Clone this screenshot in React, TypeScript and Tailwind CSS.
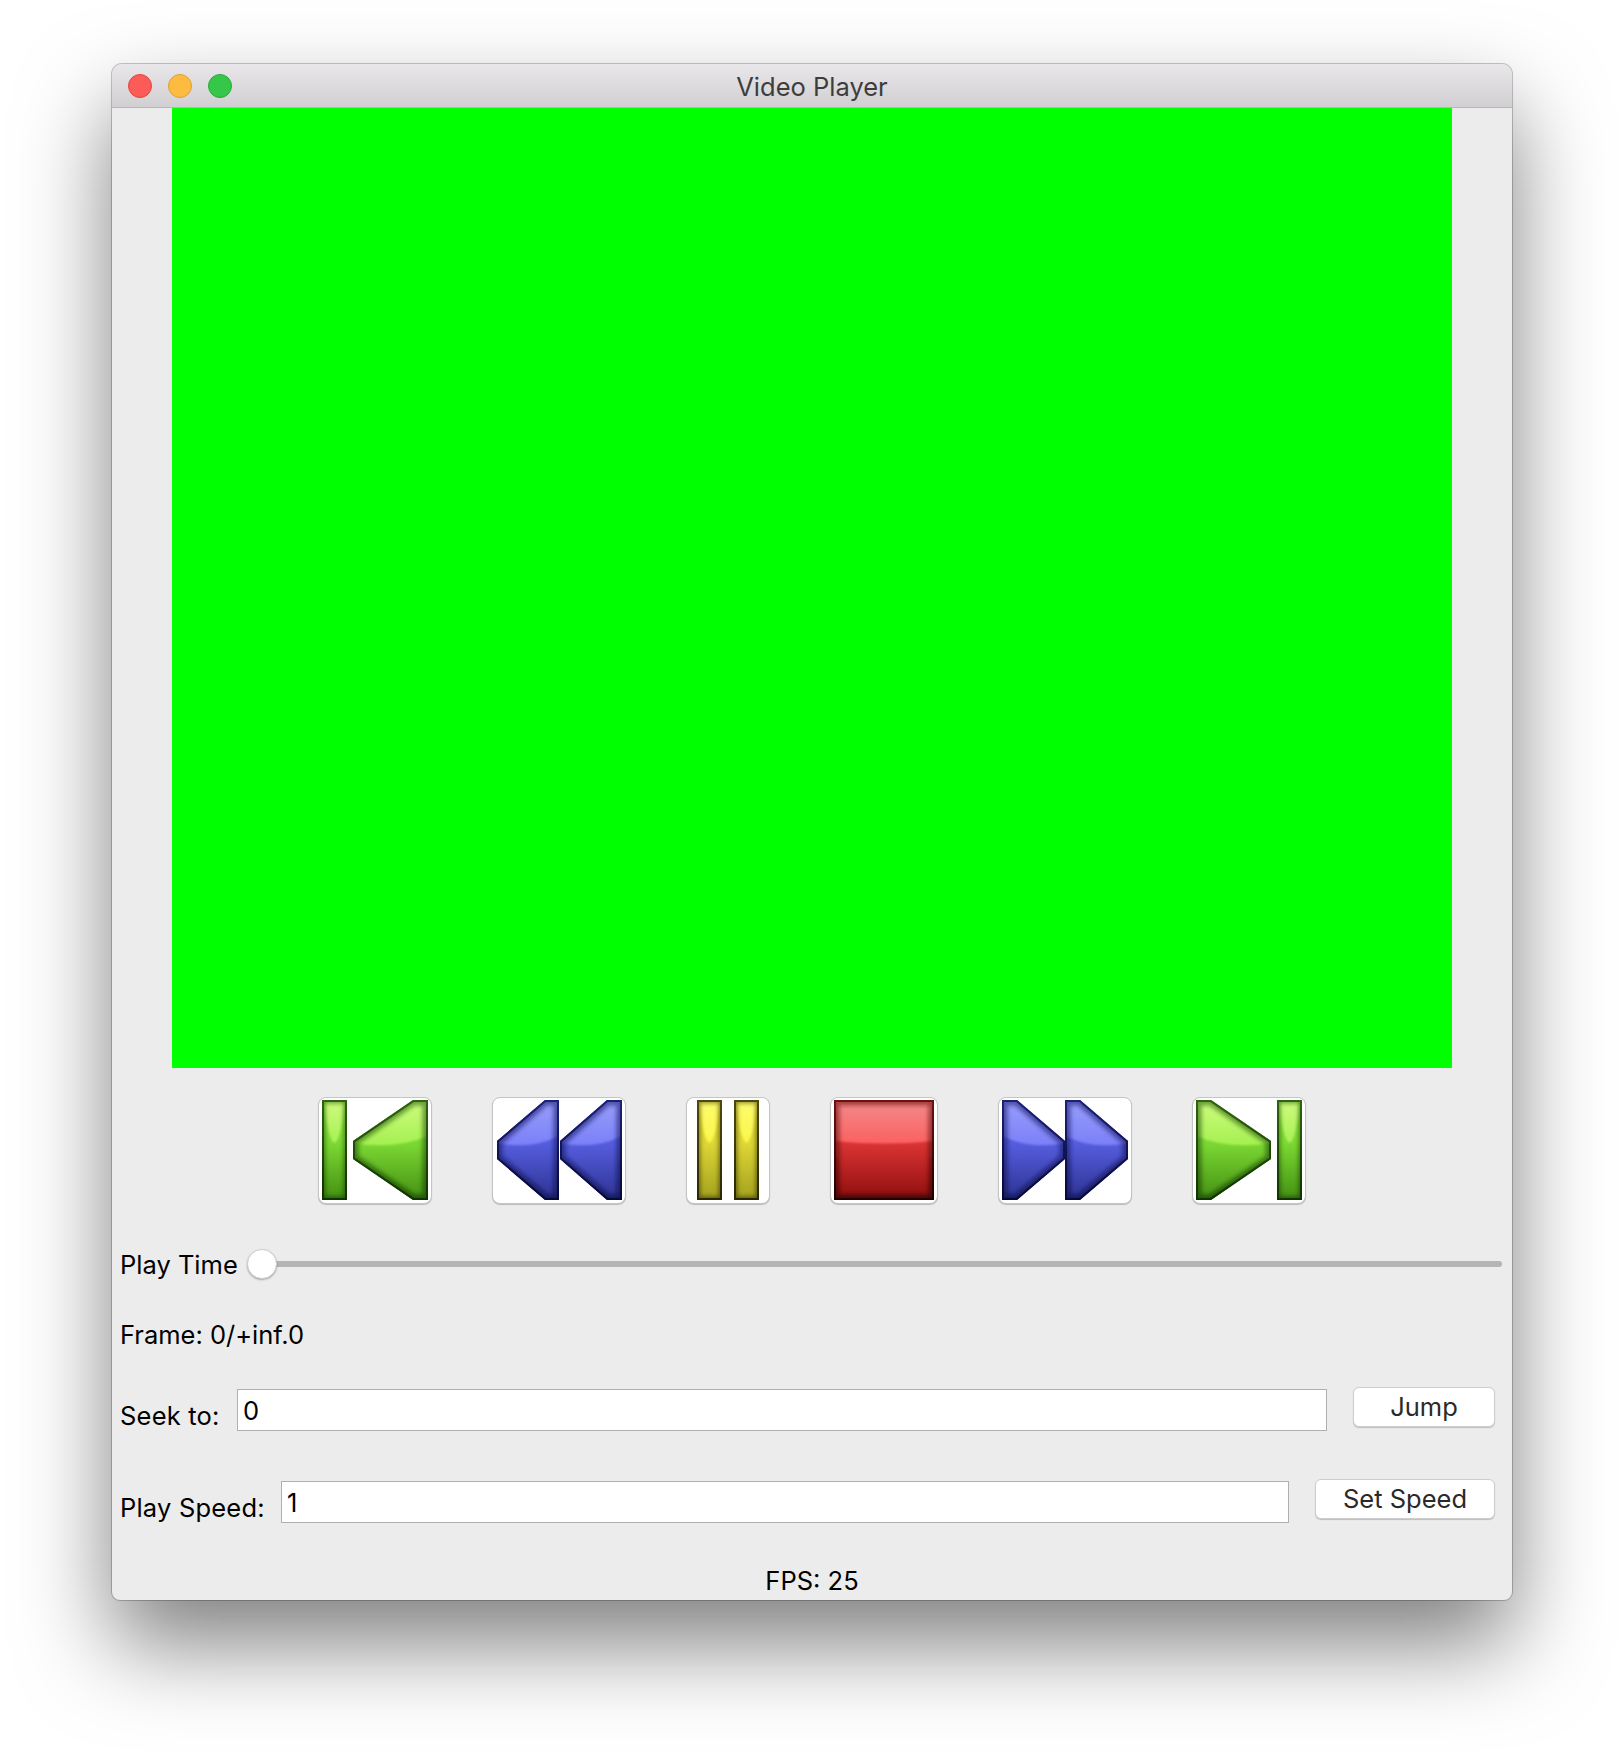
import { useId } from "react";

const palettes = {
  green: { top: "#a2ec50", mid: "#7ad632", bottom: "#438f12", glossTop: "#d4fc84", glossBottom: "#a8f454", edgeTop: "#2f6410", edgeBottom: "#0f3300" },
  blue: { top: "#6a70ea", mid: "#555cdc", bottom: "#2c3290", glossTop: "#9ea3fb", glossBottom: "#7e84fa", edgeTop: "#1c2176", edgeBottom: "#05083a" },
  yellow: { top: "#ece43e", mid: "#dcd535", bottom: "#a3a01e", glossTop: "#ffff74", glossBottom: "#fdfa48", edgeTop: "#4e4a0e", edgeBottom: "#2a2800" },
  red: { top: "#ee4444", mid: "#d83232", bottom: "#8e0e0e", glossTop: "#f49292", glossBottom: "#ff6464", edgeTop: "#701010", edgeBottom: "#1e0000" },
};

type Shape = { d: string; gloss: string; glow: number };

// left-pointing arrow with its tip at x, flat side at x + w
const leftArrow = (x: number, w: number, apex: number): Shape => ({
  d: `M${x} 41L${x + apex} 0H${x + w}V100H${x + apex}L${x} 59Z`,
  gloss: `M${x} -2H${x + w}V36Q${x + w * 0.55} 50 ${x} 43Z`,
  glow: 11,
});

const rightArrow = (x: number, w: number, apex: number): Shape => ({
  d: `M${x} 0H${x + apex}L${x + w} 41V59L${x + apex} 100H${x}Z`,
  gloss: `M${x} -2H${x + w}V43Q${x + w * 0.45} 50 ${x} 36Z`,
  glow: 11,
});

const bar = (x: number, w: number): Shape => ({
  d: `M${x} 0H${x + w}V100H${x}Z`,
  gloss: `M${x + 3} 0H${x + w - 3}C${x + w - 3} 22 ${x + w * 0.66} 42 ${x + w / 2} 43C${x + w * 0.34} 42 ${x + 3} 22 ${x + 3} 0Z`,
  glow: 7,
});

const block = (x: number, w: number): Shape => ({
  d: `M${x} 0H${x + w}V100H${x}Z`,
  gloss: `M${x} -2H${x + w}V41Q${x + w / 2} 46 ${x} 41Z`,
  glow: 11,
});

function GlossIcon({ width, color, shapes }: { width: number; color: keyof typeof palettes; shapes: Shape[] }) {
  const id = useId();
  const p = palettes[color];
  return (
    <svg width={width} height={100} viewBox={`0 0 ${width} 100`} className="block">
      <defs>
        <linearGradient id={`${id}b`} x1="0" y1="0" x2="0" y2="100" gradientUnits="userSpaceOnUse">
          <stop offset="0" stopColor={p.top} />
          <stop offset="0.45" stopColor={p.mid} />
          <stop offset="1" stopColor={p.bottom} />
        </linearGradient>
        <linearGradient id={`${id}g`} x1="0" y1="0" x2="0" y2="45" gradientUnits="userSpaceOnUse">
          <stop offset="0" stopColor={p.glossTop} />
          <stop offset="1" stopColor={p.glossBottom} />
        </linearGradient>
        <linearGradient id={`${id}e`} x1="0" y1="0" x2="0" y2="100" gradientUnits="userSpaceOnUse">
          <stop offset="0" stopColor={p.edgeTop} />
          <stop offset="1" stopColor={p.edgeBottom} />
        </linearGradient>
        <filter id={`${id}f`} x="-20%" y="-20%" width="140%" height="140%">
          <feGaussianBlur stdDeviation="2.2" />
        </filter>
        <filter id={`${id}s`} x="-20%" y="-20%" width="140%" height="140%">
          <feGaussianBlur stdDeviation="1.2" />
        </filter>
      </defs>
      {shapes.map((s, i) => (
        <g key={i}>
          <clipPath id={`${id}c${i}`}>
            <path d={s.d} />
          </clipPath>
          <g clipPath={`url(#${id}c${i})`}>
            <path d={s.d} fill={`url(#${id}b)`} />
            <path d={s.gloss} fill={`url(#${id}g)`} opacity="0.92" filter={`url(#${id}s)`} />
            <path d={s.d} fill="none" stroke={`url(#${id}e)`} strokeWidth={s.glow} opacity="0.6" filter={`url(#${id}f)`} />
            <path d={s.d} fill="none" stroke={`url(#${id}e)`} strokeWidth="4" />
          </g>
        </g>
      ))}
    </svg>
  );
}

function TransportButton({ className, children }: { className: string; children: React.ReactNode }) {
  return (
    <button className={`flex h-[107px] items-start justify-center rounded-[8px] border border-[#c4c4c4] bg-white pt-[2px] shadow-[0_1px_1px_rgba(0,0,0,0.2)] ${className}`}>
      {children}
    </button>
  );
}

function ActionButton({ className, children }: { className: string; children: React.ReactNode }) {
  return (
    <button className={`h-10 rounded-[6px] border border-[#cdcdcd] bg-white text-[25.5px] leading-[38px] text-[#2a2a2a] shadow-[0_1px_1px_rgba(0,0,0,0.2)] ${className}`}>
      {children}
    </button>
  );
}

export default function App() {
  return (
    <div className="h-[1760px] overflow-hidden bg-white pt-[64px] pl-[112px] font-['Inter',sans-serif] text-[25.5px] text-black">
      <div className="flex h-[1536px] w-[1400px] flex-col rounded-t-[10px] rounded-b-[8px] bg-[#ececec] shadow-[0_0_0_1px_rgba(0,0,0,0.22),0_44px_90px_rgba(0,0,0,0.5)]">
        {/* Title bar */}
        <div className="relative flex h-[44px] shrink-0 items-center justify-center rounded-t-[10px] border-b border-[#b8b6b8] bg-gradient-to-b from-[#e9e7e9] to-[#d1cfd1]">
          <div className="absolute top-[10px] left-[16px] flex gap-4">
            <span className="h-6 w-6 rounded-full border border-[#e0443e] bg-[#fc5b57]" />
            <span className="h-6 w-6 rounded-full border border-[#dea034] bg-[#fdbb40]" />
            <span className="h-6 w-6 rounded-full border border-[#27aa35] bg-[#35c74a]" />
          </div>
          <span className="mt-[4px] text-[#3d3d3d]">Video Player</span>
        </div>

        {/* Video surface */}
        <div className="mx-auto h-[960px] w-[1280px] shrink-0 bg-[#00ff00]" />

        {/* Transport */}
        <div className="mt-[29px] flex justify-center gap-[60px]">
          <TransportButton className="w-[114px]">
            <GlossIcon width={106} color="green" shapes={[bar(0, 25), leftArrow(31, 75, 60)]} />
          </TransportButton>
          <TransportButton className="w-[134px]">
            <GlossIcon width={126} color="blue" shapes={[leftArrow(1, 62, 48), leftArrow(64, 62, 47)]} />
          </TransportButton>
          <TransportButton className="w-[84px]">
            <GlossIcon width={62} color="yellow" shapes={[bar(0, 25), bar(37, 25)]} />
          </TransportButton>
          <TransportButton className="w-[108px]">
            <GlossIcon width={100} color="red" shapes={[block(0, 100)]} />
          </TransportButton>
          <TransportButton className="w-[134px]">
            <GlossIcon width={126} color="blue" shapes={[rightArrow(0, 63, 15), rightArrow(63, 63, 15)]} />
          </TransportButton>
          <TransportButton className="w-[114px]">
            <GlossIcon width={106} color="green" shapes={[rightArrow(0, 75, 15), bar(81, 25)]} />
          </TransportButton>
        </div>

        {/* Play time slider */}
        <div className="mt-[45px] flex h-[30px] items-center pr-[10px] pl-[8px]">
          <span className="mt-[2px] w-[127px] leading-[30px]">Play Time</span>
          <div className="relative flex h-[30px] flex-1 items-center">
            <div className="h-[6px] w-full rounded-full bg-[#b5b5b5]" />
            <div className="absolute top-0 left-0 h-[30px] w-[30px] rounded-full border border-[#d0d0d0] bg-white shadow-[0_1px_2px_rgba(0,0,0,0.3)]" />
          </div>
        </div>

        <div className="mt-[40px] h-[30px] pl-[8px] pt-[1px] leading-[30px]">Frame: 0/+inf.0</div>

        {/* Seek */}
        <div className="mt-[38px] flex items-start pl-[8px]">
          <span className="mt-[14px] w-[117px] leading-[30px] tracking-[0.2px]">Seek to:</span>
          <div className="mt-[2px] h-[42px] w-[1090px] border border-[#b0b0b0] bg-white pl-[5px] leading-[42px]">0</div>
          <ActionButton className="ml-[26px] w-[142px]">Jump</ActionButton>
        </div>

        {/* Speed */}
        <div className="mt-[48px] flex items-start pl-[8px]">
          <span className="mt-[14px] w-[161px] leading-[30px] tracking-[0.2px]">Play Speed:</span>
          <div className="mt-[2px] h-[42px] w-[1008px] border border-[#b0b0b0] bg-white pl-[5px] leading-[42px]">1</div>
          <ActionButton className="ml-[26px] w-[180px]">Set Speed</ActionButton>
        </div>

        <div className="mt-[43px] text-center leading-[30px]">FPS: 25</div>
      </div>
    </div>
  );
}
